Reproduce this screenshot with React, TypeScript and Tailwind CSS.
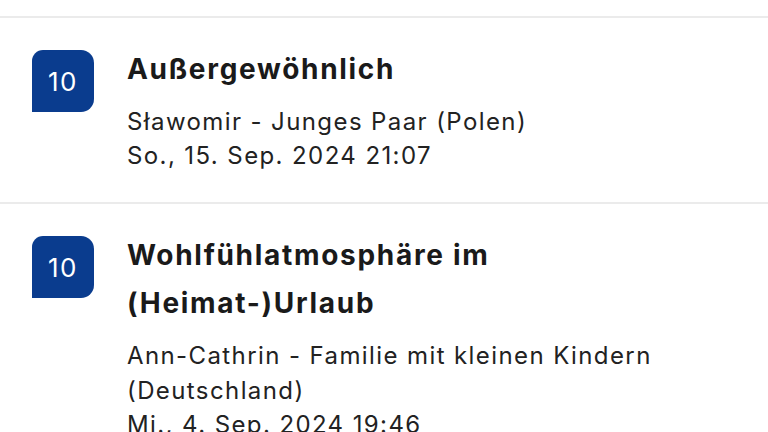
type Review = {
  score: number
  title: string
  author: string
  date: string
}

const reviews: Review[] = [
  {
    score: 10,
    title: 'Außergewöhnlich',
    author: 'Sławomir - Junges Paar (Polen)',
    date: 'So., 15. Sep. 2024 21:07',
  },
  {
    score: 10,
    title: 'Wohlfühlatmosphäre im (Heimat-)Urlaub',
    author: 'Ann-Cathrin - Familie mit kleinen Kindern (Deutschland)',
    date: 'Mi., 4. Sep. 2024 19:46',
  },
]

function ScoreBadge({ score }: { score: number }) {
  return (
    <div className="mt-[5px] flex h-[62px] w-[62px] shrink-0 items-center justify-center rounded-tl-[11px] rounded-tr-[13px] rounded-br-[13px] rounded-bl-none bg-[#0a3c8e] text-[26px] tracking-[1.5px] text-white">
      {score}
    </div>
  )
}

function ReviewRow({ review }: { review: Review }) {
  return (
    <div className="border-t-2 border-[#ebebeb] pt-[27px] pb-[30px] pl-[32px] pr-[64px]">
      <div className="flex gap-[33px]">
        <ScoreBadge score={review.score} />
        <div className="flex-1">
          <h3 className="text-[28px] leading-[48px] font-bold tracking-[1.7px] text-[#1a1a1a]">{review.title}</h3>
          <div className="mt-[11px] text-[24px] tracking-[1.4px] text-[#222]">
            <p className="leading-[35px]">{review.author}</p>
            <p className="leading-[33px]">{review.date}</p>
          </div>
        </div>
      </div>
    </div>
  )
}

export default function App() {
  return (
    <div className="h-[432px] w-[768px] overflow-hidden bg-white font-['Inter',sans-serif]">
      <div className="h-[16px]" />
      {reviews.map((r, i) => (
        <ReviewRow key={i} review={r} />
      ))}
    </div>
  )
}
